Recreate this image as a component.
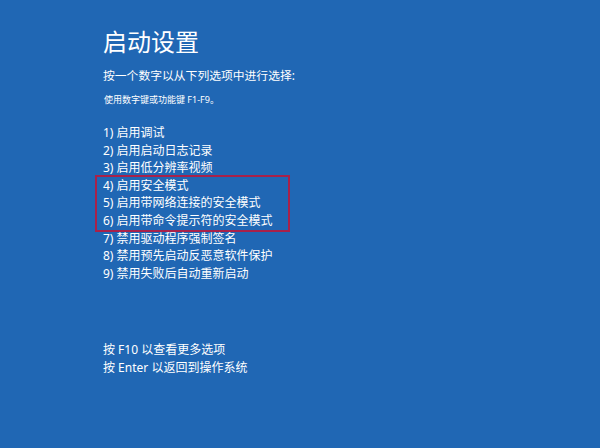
const options = [
  "1) 启用调试",
  "2) 启用启动日志记录",
  "3) 启用低分辨率视频",
];

const safeModes = [
  "4) 启用安全模式",
  "5) 启用带网络连接的安全模式",
  "6) 启用带命令提示符的安全模式",
];

const moreOptions = [
  "7) 禁用驱动程序强制签名",
  "8) 禁用预先启动反恶意软件保护",
  "9) 禁用失败后自动重新启动",
];

const App = () => {
  return (
    <div className="w-[600px] h-[448px] overflow-hidden bg-[#2067b4] text-white font-['Noto_Sans','Noto_Sans_CJK_SC',sans-serif] pl-[103px] pt-[27px]">
      {/* Header */}
      <h1 className="text-[24px] leading-[30px] font-normal">启动设置</h1>
      <p className="mt-[10px] text-[11.8px] leading-[16px]">按一个数字以从下列选项中进行选择:</p>
      <p className="mt-[11px] text-[9px] leading-[12px] pl-[1px]">使用数字键或功能键 F1-F9。</p>

      {/* Options */}
      <div className="mt-[18px] text-[12px] leading-[17.6px]">
        {options.map((o) => (
          <div key={o}>{o}</div>
        ))}
        <div className="ml-[-6px] pl-[6px] w-[191px] outline-2 outline-[#a8214a]">
          {safeModes.map((o) => (
            <div key={o}>{o}</div>
          ))}
        </div>
        {moreOptions.map((o) => (
          <div key={o}>{o}</div>
        ))}
      </div>

      {/* Footer */}
      <div className="mt-[59px] text-[12px] leading-[18px]">
        <div>按 F10 以查看更多选项</div>
        <div>按 Enter 以返回到操作系统</div>
      </div>
    </div>
  );
};

export default App;
